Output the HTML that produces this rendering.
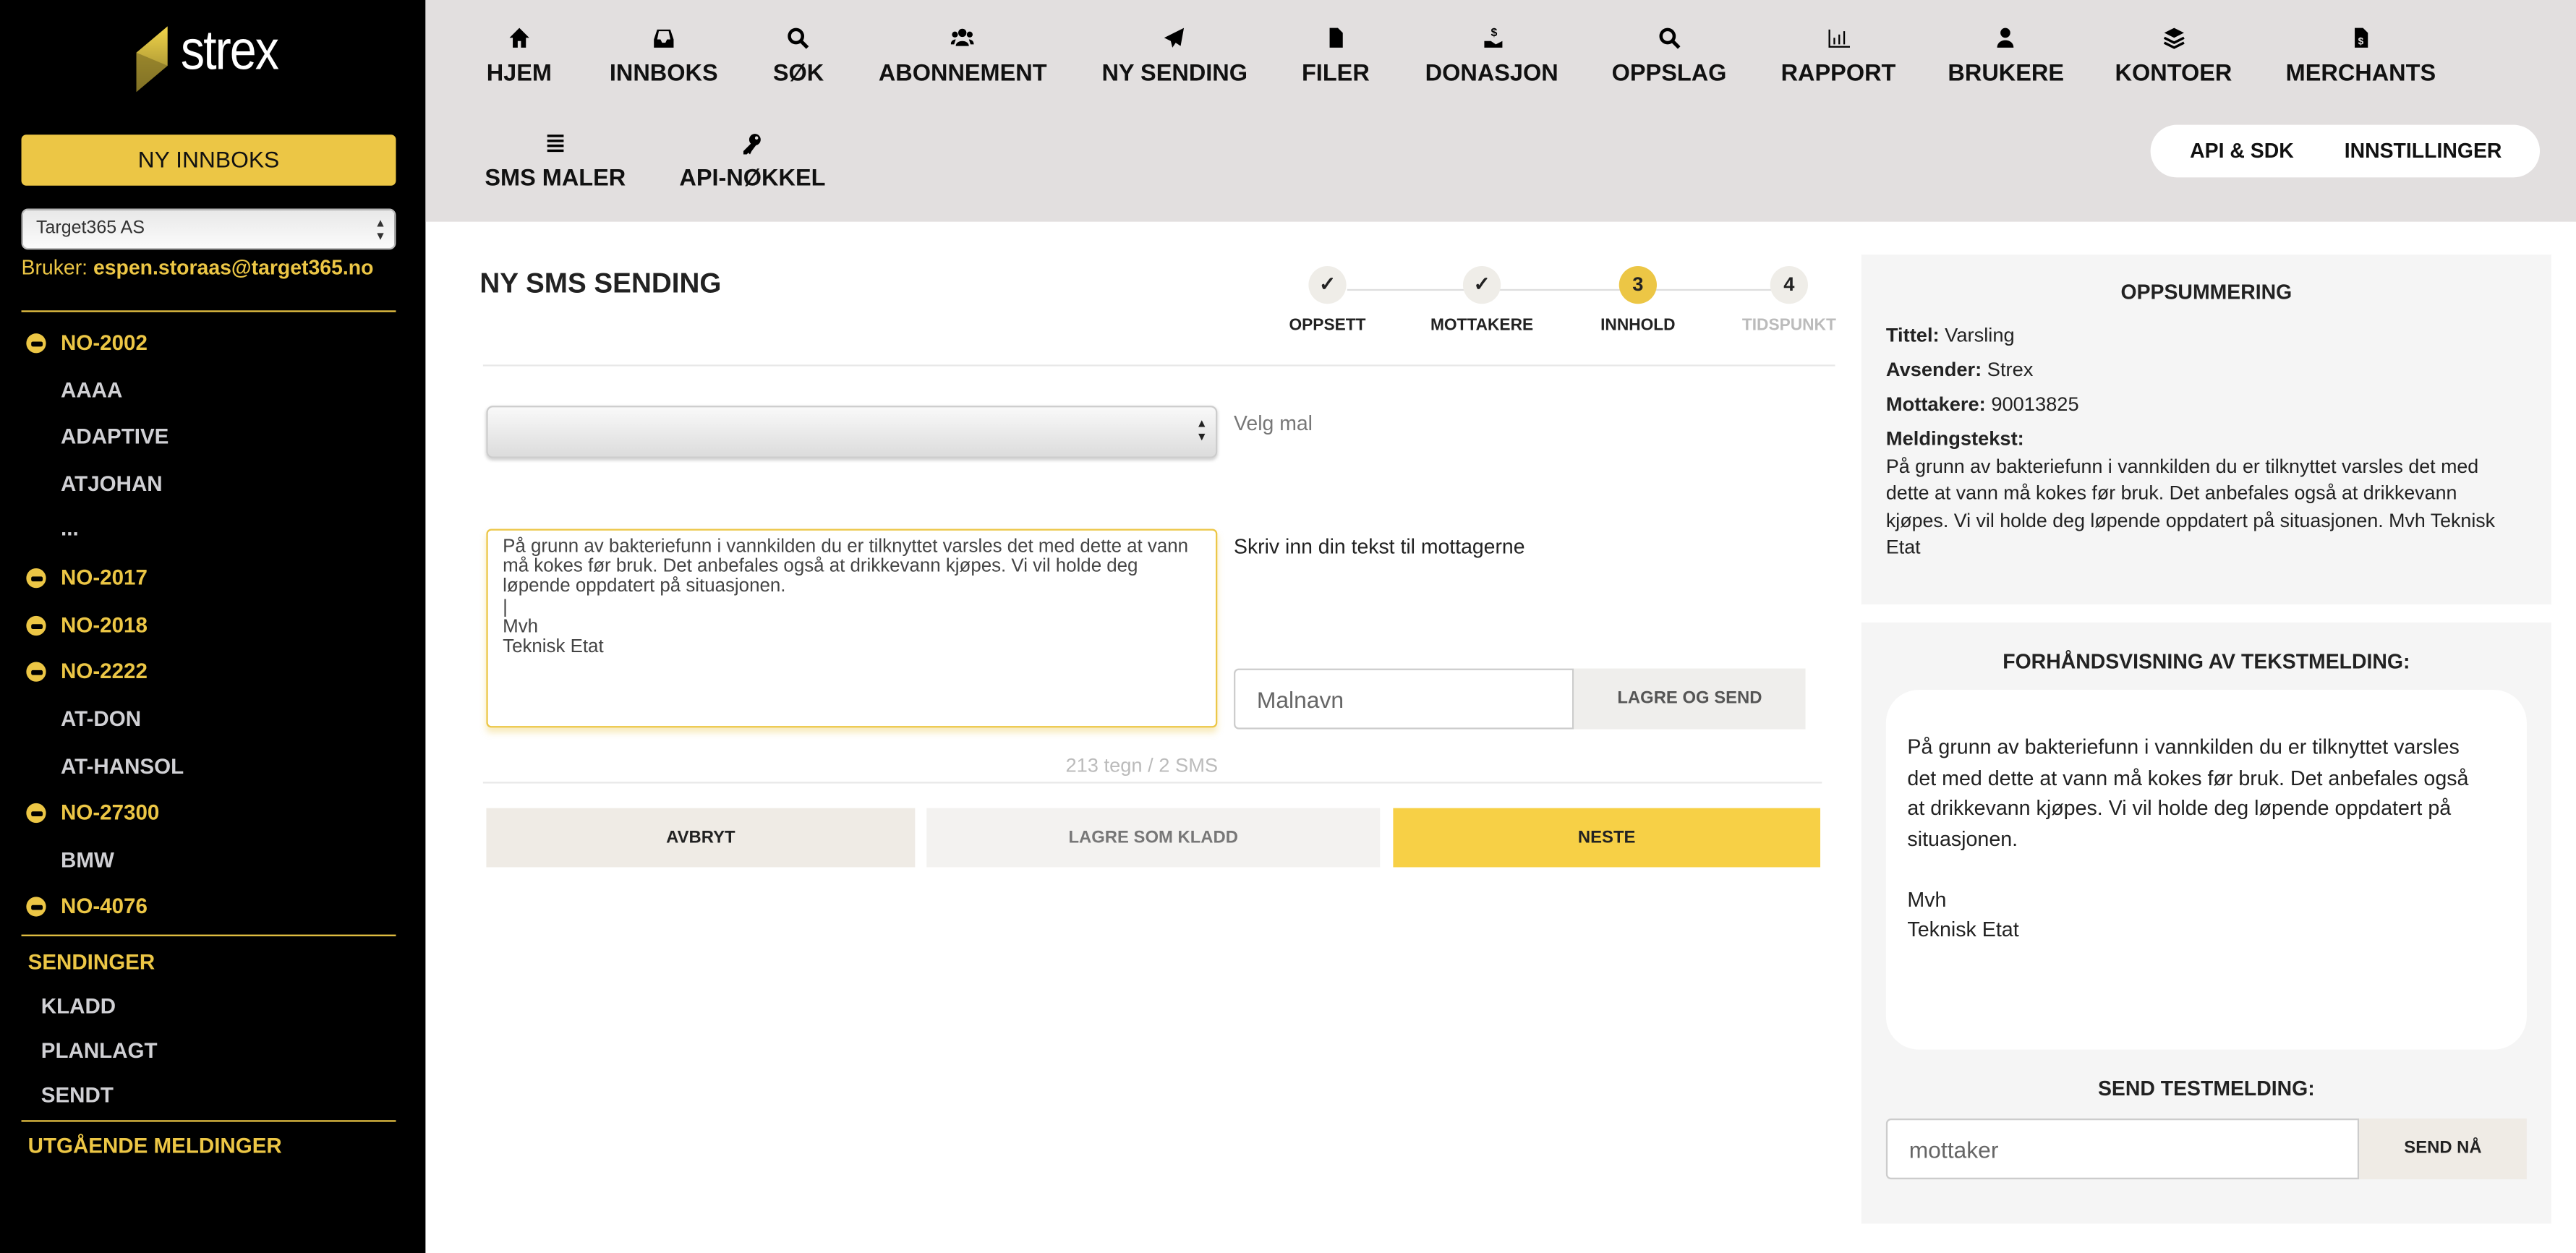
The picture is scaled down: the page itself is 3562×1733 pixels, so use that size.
<!DOCTYPE html>
<html><head><meta charset="utf-8"><style>
*{margin:0;padding:0;box-sizing:border-box}
html,body{width:3562px;height:1732px;overflow:hidden;background:#fff}
#r{position:absolute;left:0;top:0;width:1568px;height:763px;transform:scale(2.27168);transform-origin:0 0;font-family:"Liberation Sans",Arial,sans-serif;color:#222}
.a{position:absolute}
.sb{left:0;top:0;width:259px;height:763px;background:#000}
.y{color:#ecc645}
.g{color:#d0d0d4}
.it{font-size:13px;font-weight:bold;white-space:nowrap}
.min{position:absolute;width:12px;height:12px;border-radius:50%;background:#ecc645}
.min:after{content:"";position:absolute;left:2.5px;top:4.5px;width:7px;height:3px;background:#000;border-radius:1px}
.hl{height:1px;background:#ecc645;left:13px;width:228px}
.top{left:259px;top:0;width:1309px;height:135px;background:#e2dfdf}
.nv{position:absolute;text-align:center;font-weight:bold;font-size:14.3px;color:#111;white-space:nowrap;transform:translateX(-50%)}
.nv svg{display:block;margin:0 auto 7px;width:14px;height:14px}
.step{position:absolute;width:23px;height:23px;border-radius:50%;background:#efede8;text-align:center;line-height:23px;font-size:12px;font-weight:bold;transform:translateX(-50%)}
.sl{position:absolute;font-size:10px;font-weight:bold;transform:translateX(-50%);white-space:nowrap}
.btn{position:absolute;text-align:center;font-size:10.5px;font-weight:bold}
.p{font-size:12px;line-height:16.6px}
</style></head><body><div id="r">
<div class="a sb"></div>
<svg class="a" style="left:82px;top:16px" width="24" height="40" viewBox="0 0 24 40"><defs><linearGradient id="lg" x1="0" y1="0" x2="0" y2="1"><stop offset="0" stop-color="#f2d54a"/><stop offset="1" stop-color="#8c7a2a"/></linearGradient></defs><polygon points="20,0 20,24 1,40 1,16" fill="url(#lg)"/><polygon points="1,16 20,24 1,40" fill="#7a6a22" opacity=".6"/></svg>
<div class="a" style="left:110px;top:12px;font-size:34px;color:#fff;letter-spacing:-1px;transform:scaleX(.86);transform-origin:0 0">strex</div>
<div class="a" style="left:13px;top:82px;width:228px;height:31px;background:#ecc645;border-radius:3px;text-align:center;line-height:31px;font-size:14px;color:#111">NY INNBOKS</div>
<div class="a" style="left:13px;top:127px;width:228px;height:25px;border-radius:4px;background:linear-gradient(#e8e8e8,#fbfbfb);border:1px solid #bbb;font-size:11px;line-height:23px;padding-left:8px;color:#333">Target365 AS<span style="position:absolute;right:5px;top:0;font-size:7px;line-height:8px;padding-top:5px">▲<br>▼</span></div>
<div class="a y" style="left:13px;top:156px;font-size:12.5px;white-space:nowrap">Bruker: <b>espen.storaas@target365.no</b></div>
<div class="a hl" style="top:189px"></div>
<div class="min" style="left:16px;top:203px"></div><div class="a it y" style="left:37px;top:201px">NO-2002</div>
<div class="a it g" style="left:37px;top:230px">AAAA</div>
<div class="a it g" style="left:37px;top:258px">ADAPTIVE</div>
<div class="a it g" style="left:37px;top:287px">ATJOHAN</div>
<div class="a it g" style="left:37px;top:314px">...</div>
<div class="min" style="left:16px;top:346px"></div><div class="a it y" style="left:37px;top:344px">NO-2017</div>
<div class="min" style="left:16px;top:375px"></div><div class="a it y" style="left:37px;top:373px">NO-2018</div>
<div class="min" style="left:16px;top:403px"></div><div class="a it y" style="left:37px;top:401px">NO-2222</div>
<div class="a it g" style="left:37px;top:430px">AT-DON</div>
<div class="a it g" style="left:37px;top:459px">AT-HANSOL</div>
<div class="min" style="left:16px;top:489px"></div><div class="a it y" style="left:37px;top:487px">NO-27300</div>
<div class="a it g" style="left:37px;top:516px">BMW</div>
<div class="min" style="left:16px;top:546px"></div><div class="a it y" style="left:37px;top:544px">NO-4076</div>
<div class="a hl" style="top:569px"></div>
<div class="a it y" style="left:17px;top:578px">SENDINGER</div>
<div class="a it g" style="left:25px;top:605px">KLADD</div>
<div class="a it g" style="left:25px;top:632px">PLANLAGT</div>
<div class="a it g" style="left:25px;top:659px">SENDT</div>
<div class="a hl" style="top:682px"></div>
<div class="a it y" style="left:17px;top:690px">UTGÅENDE MELDINGER</div>

<div class="a top"></div>
<div class="nv" style="left:316px;top:16px"><svg viewBox="0 0 14 14"><path d="M7 1L1 7h2v6h3V9h2v4h3V7h2z"/></svg>HJEM</div>
<div class="nv" style="left:404px;top:16px"><svg viewBox="0 0 14 14"><path d="M3 2h8l2 6v5H1V8zM3 8h2l1 2h2l1-2h2L10 3H4z"/></svg>INNBOKS</div>
<div class="nv" style="left:486px;top:16px"><svg viewBox="0 0 14 14"><circle cx="6" cy="6" r="4" fill="none" stroke="#000" stroke-width="2"/><path d="M9 9l4 4" stroke="#000" stroke-width="2.2"/></svg>SØK</div>
<div class="nv" style="left:586px;top:16px"><svg viewBox="0 0 14 14"><circle cx="7" cy="4" r="2.5"/><circle cx="2.5" cy="5" r="1.8"/><circle cx="11.5" cy="5" r="1.8"/><path d="M3 12c0-4 8-4 8 0zM0 11c0-3 3-3 3-3l-1 3zM14 11c0-3-3-3-3-3l1 3z"/></svg>ABONNEMENT</div>
<div class="nv" style="left:715px;top:16px"><svg viewBox="0 0 14 14"><path d="M13 1L1 7l4 2 1 4 2-3 3 2z"/></svg>NY SENDING</div>
<div class="nv" style="left:813px;top:16px"><svg viewBox="0 0 14 14"><path d="M3 1h5l3 3v9H3z"/></svg>FILER</div>
<div class="nv" style="left:908px;top:16px"><svg viewBox="0 0 14 14"><text x="6" y="6" font-size="7" font-family="Liberation Sans">$</text><path d="M2 9h4l3 2 4-2v4H2z"/></svg>DONASJON</div>
<div class="nv" style="left:1016px;top:16px"><svg viewBox="0 0 14 14"><circle cx="6" cy="6" r="4" fill="none" stroke="#000" stroke-width="2"/><path d="M9 9l4 4" stroke="#000" stroke-width="2.2"/></svg>OPPSLAG</div>
<div class="nv" style="left:1119px;top:16px"><svg viewBox="0 0 14 14"><path d="M1 2h1v10h12v1H1zM4 7h1v4H4zM7 5h1v6H7zM10 3h1v8h-1z"/></svg>RAPPORT</div>
<div class="nv" style="left:1221px;top:16px"><svg viewBox="0 0 14 14"><circle cx="7" cy="4" r="3"/><path d="M2 13c0-6 10-6 10 0z"/></svg>BRUKERE</div>
<div class="nv" style="left:1323px;top:16px"><svg viewBox="0 0 14 14"><path d="M7 1l6 3-6 3-6-3z"/><path d="M1 7l6 3 6-3M1 10l6 3 6-3" fill="none" stroke="#000" stroke-width="1.5"/></svg>KONTOER</div>
<div class="nv" style="left:1437px;top:16px"><svg viewBox="0 0 14 14"><path d="M3 1h5l3 3v9H3z"/><text x="5" y="11" font-size="6" fill="#e2dfdf" font-family="Liberation Sans">$</text></svg>MERCHANTS</div>
<div class="nv" style="left:338px;top:80px"><svg viewBox="0 0 14 14"><path d="M2 2h10v1.5H2zM2 5h10v1.5H2zM2 8h10v1.5H2zM2 11h10v1.5H2z"/></svg>SMS MALER</div>
<div class="nv" style="left:458px;top:80px"><svg viewBox="0 0 14 14"><circle cx="9" cy="5" r="3.5"/><path d="M7 7l-5 5v2h2l1-1 1 1 1-2 3-4z"/><circle cx="10" cy="4" r="1" fill="#e2dfdf"/></svg>API-NØKKEL</div>
<div class="a" style="left:1309px;top:76px;width:237px;height:32px;background:#fff;border-radius:16px;font-size:12.5px;font-weight:bold;line-height:32px;color:#111"><span class="a" style="left:24px">API &amp; SDK</span><span class="a" style="left:118px">INNSTILLINGER</span></div>

<div class="a" style="left:292px;top:163px;font-size:17px;font-weight:bold;color:#222">NY SMS SENDING</div>
<div class="a" style="left:820px;top:176px;width:260px;height:1px;background:#ddd"></div>
<div class="step" style="left:808px;top:162px">✓</div>
<div class="step" style="left:902px;top:162px">✓</div>
<div class="step" style="left:997px;top:162px;background:#ecc645">3</div>
<div class="step" style="left:1089px;top:162px">4</div>
<div class="sl" style="left:808px;top:193px">OPPSETT</div>
<div class="sl" style="left:902px;top:193px">MOTTAKERE</div>
<div class="sl" style="left:997px;top:193px">INNHOLD</div>
<div class="sl" style="left:1089px;top:193px;color:#bbb">TIDSPUNKT</div>
<div class="a" style="left:294px;top:222px;width:823px;height:1px;background:#e8e8e8"></div>
<div class="a" style="left:296px;top:247px;width:445px;height:32px;border:1px solid #ccc;border-radius:4px;background:linear-gradient(#f9f9f9,#dcdcdc);box-shadow:0 1px 2px rgba(0,0,0,.2)"><span class="a" style="right:5px;top:7px;font-size:7px;line-height:8px">▲<br>▼</span></div>
<div class="a" style="left:751px;top:251px;font-size:12.5px;color:#777">Velg mal</div>
<div class="a" style="left:296px;top:322px;width:445px;height:121px;border:1px solid #ecc645;border-radius:3px;box-shadow:0 3px 4px rgba(236,198,69,.35);padding:4px 9px;font-size:11.4px;line-height:12.2px;color:#444">På grunn av bakteriefunn i vannkilden du er tilknyttet varsles det med dette at vann må kokes før bruk. Det anbefales også at drikkevann kjøpes. Vi vil holde deg løpende oppdatert på situasjonen.<br>|<br>Mvh<br>Teknisk Etat</div>
<div class="a" style="left:751px;top:326px;font-size:12.5px;color:#222">Skriv inn din tekst til mottagerne</div>
<div class="a" style="left:751px;top:407px;width:207px;height:37px;border:1px solid #ccc;border-radius:3px 0 0 3px;font-size:14px;line-height:36px;padding-left:13px;color:#666">Malnavn</div>
<div class="btn" style="left:958px;top:407px;width:141px;height:37px;line-height:37px;background:#efeeec;color:#555">LAGRE OG SEND</div>
<div class="a" style="left:600px;top:459px;width:190px;text-align:center;font-size:12px;color:#bbb">213 tegn / 2 SMS</div>
<div class="a" style="left:294px;top:476px;width:815px;height:1px;background:#e8e8e8"></div>
<div class="btn" style="left:296px;top:492px;width:261px;height:36px;line-height:36px;background:#efebe5;color:#222">AVBRYT</div>
<div class="btn" style="left:564px;top:492px;width:276px;height:36px;line-height:36px;background:#f3f2f0;color:#777">LAGRE SOM KLADD</div>
<div class="btn" style="left:848px;top:492px;width:260px;height:36px;line-height:36px;background:#f7d046;color:#222">NESTE</div>

<div class="a" style="left:1133px;top:155px;width:420px;height:213px;background:#f5f5f5"></div>
<div class="a" style="left:1133px;top:171px;width:420px;text-align:center;font-size:12.5px;font-weight:bold">OPPSUMMERING</div>
<div class="a p" style="left:1148px;top:196px"><b>Tittel:</b> Varsling</div>
<div class="a p" style="left:1148px;top:217px"><b>Avsender:</b> Strex</div>
<div class="a p" style="left:1148px;top:238px"><b>Mottakere:</b> 90013825</div>
<div class="a p" style="left:1148px;top:259px;width:372px"><b>Meldingstekst:</b><br><span style="font-size:11.8px">På grunn av bakteriefunn i vannkilden du er tilknyttet varsles det med dette at vann må kokes før bruk. Det anbefales også at drikkevann kjøpes. Vi vil holde deg løpende oppdatert på situasjonen. Mvh Teknisk Etat</span></div>

<div class="a" style="left:1133px;top:379px;width:420px;height:366px;background:#f5f5f5"></div>
<div class="a" style="left:1133px;top:396px;width:420px;text-align:center;font-size:12.5px;font-weight:bold">FORHÅNDSVISNING AV TEKSTMELDING:</div>
<div class="a" style="left:1148px;top:420px;width:390px;height:219px;background:#fff;border-radius:20px;padding:26px 26px 26px 13px;font-size:12.6px;line-height:18.5px;color:#222">På grunn av bakteriefunn i vannkilden du er tilknyttet varsles det med dette at vann må kokes før bruk. Det anbefales også at drikkevann kjøpes. Vi vil holde deg løpende oppdatert på situasjonen.<br><br>Mvh<br>Teknisk Etat</div>
<div class="a" style="left:1133px;top:656px;width:420px;text-align:center;font-size:12.5px;font-weight:bold">SEND TESTMELDING:</div>
<div class="a" style="left:1148px;top:681px;width:288px;height:37px;background:#fff;border:1px solid #ccc;border-radius:3px 0 0 3px;font-size:14px;line-height:36px;padding-left:13px;color:#666">mottaker</div>
<div class="btn" style="left:1436px;top:681px;width:102px;height:37px;line-height:37px;background:#efebe5;color:#222">SEND NÅ</div>
</div></body></html>
